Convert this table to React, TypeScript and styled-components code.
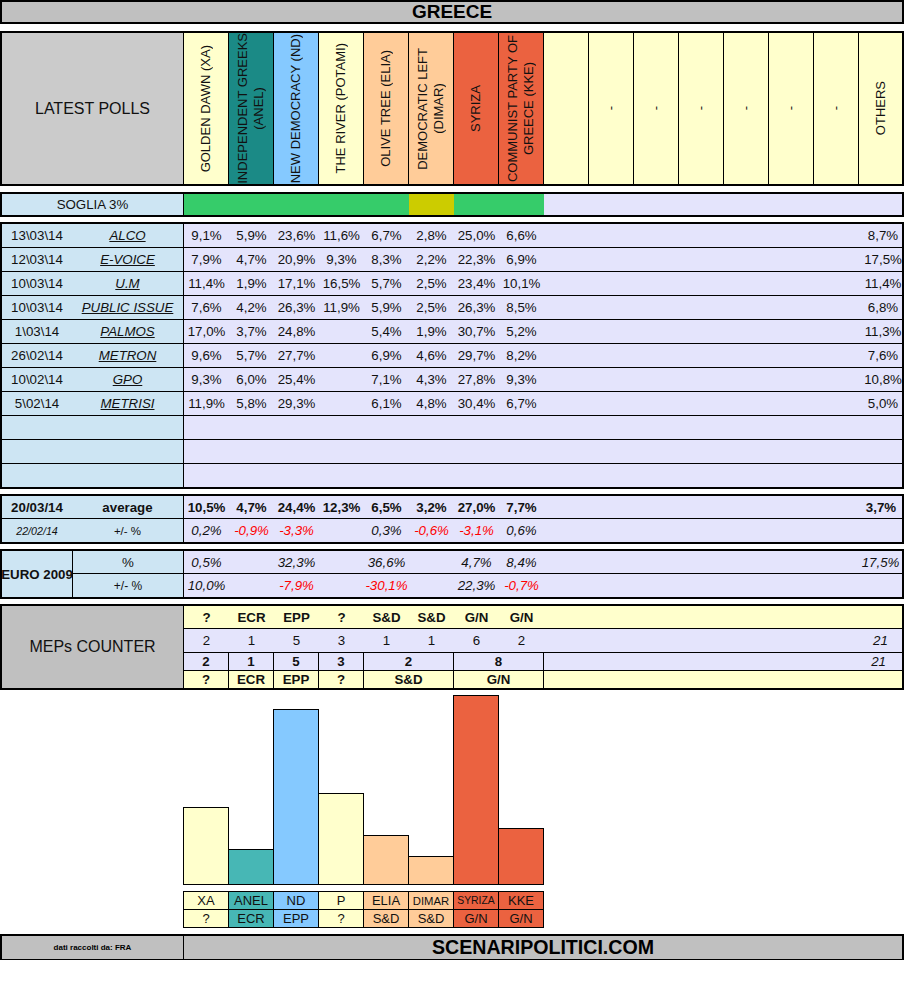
import React from 'react';
import styled, { createGlobalStyle } from 'styled-components';

const Y = '#ffffcc';
const TEAL = '#1b8a86';
const TEAL_LIGHT = '#47b7b5';
const BLUE = '#85c9ff';
const PEACH = '#ffcc99';
const RED = '#eb6240';
const LAV = '#e4e4fc';
const LBLUE = '#cde5f3';
const GRAY = '#c0c0c0';
const GREEN = '#36cc6a';
const OLIVE = '#cccc00';
const NEG = '#ff0000';
const COLS = 'repeat(15, 45px) 43px';

const GlobalStyle = createGlobalStyle`
  html, body { margin: 0; padding: 0; background: #fff; }
  body { font-family: "Liberation Sans", Arial, sans-serif; color: #111; }
  * { box-sizing: border-box; }
`;

const Sheet = styled.div`
  width: 904px;
  display: flex;
  flex-direction: column;
`;

const TitleBar = styled.div`
  height: 24px;
  border: 2px solid #000;
  background: ${GRAY};
  display: flex;
  align-items: center;
  justify-content: center;
  font-weight: bold;
  font-size: 19px;
  color: #000;
`;

const Section = styled.div<{ $mt: number }>`
  margin-top: ${(p) => p.$mt}px;
  border: 2px solid #000;
  background: #000;
`;

const HeaderGrid = styled(Section)`
  height: 155px;
  display: grid;
  grid-template-columns: 181px repeat(15, 44px) 43px;
  column-gap: 1px;
`;

const HeaderLabel = styled.div`
  background: #cbcbcb;
  display: flex;
  align-items: center;
  justify-content: center;
  font-size: 16px;
  color: #111;
`;

const PartyHead = styled.div<{ $bg: string }>`
  background: ${(p) => p.$bg};
  display: flex;
  align-items: center;
  justify-content: center;
  overflow: visible;
`;

const VerticalText = styled.span`
  writing-mode: vertical-rl;
  transform: rotate(180deg);
  white-space: nowrap;
  text-align: center;
  font-size: 13px;
  line-height: 16px;
  color: #111;
`;

const SogliaGrid = styled(Section)`
  height: 25px;
  display: grid;
  grid-template-columns: 181px 718px;
  column-gap: 1px;
`;

const SogliaLabel = styled.div`
  background: ${LBLUE};
  display: flex;
  align-items: center;
  justify-content: center;
  font-size: 13.3px;
`;

const SegRow = styled.div`
  background: ${LAV};
  display: grid;
  grid-template-columns: ${COLS};
`;

const Seg = styled.div<{ $bg: string }>`
  background: ${(p) => p.$bg};
`;

const Table = styled(Section)`
  display: flex;
  flex-direction: column;
  row-gap: 1px;
`;

const Row = styled.div<{ $h: number }>`
  height: ${(p) => p.$h}px;
  display: grid;
  grid-template-columns: 181px 718px;
  column-gap: 1px;
`;

const LeftPair = styled.div`
  background: ${LBLUE};
  display: grid;
  grid-template-columns: 70px 111px;
`;

const LeftText = styled.div<{ $bold?: boolean; $italic?: boolean; $size?: number; $link?: boolean }>`
  display: flex;
  align-items: center;
  justify-content: center;
  white-space: nowrap;
  font-size: ${(p) => p.$size ?? 13.3}px;
  font-weight: ${(p) => (p.$bold ? 'bold' : 'normal')};
  font-style: ${(p) => (p.$italic || p.$link ? 'italic' : 'normal')};
  text-decoration: ${(p) => (p.$link ? 'underline' : 'none')};
  color: #111;
`;

const Values = styled.div<{ $bg?: string }>`
  background: ${(p) => p.$bg ?? LAV};
  display: grid;
  grid-template-columns: ${COLS};
`;

const Val = styled.div<{ $bold?: boolean; $italic?: boolean; $neg?: boolean; $shift?: number }>`
  display: flex;
  align-items: center;
  justify-content: center;
  white-space: nowrap;
  padding-left: ${(p) => p.$shift ?? 0}px;
  font-size: 13.3px;
  font-weight: ${(p) => (p.$bold ? 'bold' : 'normal')};
  font-style: ${(p) => (p.$italic ? 'italic' : 'normal')};
  color: ${(p) => (p.$neg ? NEG : '#111')};
`;

const EuroGrid = styled(Section)`
  display: grid;
  grid-template-columns: 70px 110px 718px;
  grid-template-rows: 22px 23px;
  gap: 1px;
`;

const EuroLabel = styled.div`
  grid-row: span 2;
  background: ${LBLUE};
  display: flex;
  align-items: center;
  justify-content: center;
  white-space: nowrap;
  font-weight: bold;
  font-size: 13.3px;
  color: #111;
`;

const EuroSub = styled(LeftText)`
  background: ${LBLUE};
`;

const MepsGrid = styled(Section)`
  display: grid;
  grid-template-columns: 181px 718px;
  column-gap: 1px;
`;

const MepsLabel = styled.div`
  background: ${GRAY};
  display: flex;
  align-items: center;
  justify-content: center;
  font-size: 16px;
  color: #111;
`;

const MepsRows = styled.div`
  display: flex;
  flex-direction: column;
  row-gap: 1px;
`;

const MepsPlain = styled.div<{ $h: number; $bg: string }>`
  height: ${(p) => p.$h}px;
  background: ${(p) => p.$bg};
  display: grid;
  grid-template-columns: ${COLS};
`;

const MepsSplit = styled.div<{ $h: number }>`
  height: ${(p) => p.$h}px;
  display: grid;
  grid-template-columns: 44px 44px 44px 44px 89px 89px 1fr;
  column-gap: 1px;
`;

const SplitCell = styled.div<{ $bg: string; $end?: boolean; $italic?: boolean }>`
  background: ${(p) => p.$bg};
  display: flex;
  align-items: center;
  justify-content: ${(p) => (p.$end ? 'flex-end' : 'center')};
  padding-right: ${(p) => (p.$end ? 16 : 0)}px;
  font-size: 13.3px;
  font-weight: ${(p) => (p.$italic ? 'normal' : 'bold')};
  font-style: ${(p) => (p.$italic ? 'italic' : 'normal')};
  color: #111;
`;

const ChartArea = styled.div`
  height: 195px;
  padding-left: 183px;
  display: flex;
  align-items: flex-end;
`;

const Bar = styled.div<{ $bg: string }>`
  width: 46px;
  border: 1px solid #000;
  background: ${(p) => p.$bg};
  & + & { margin-left: -1px; }
`;

const LabelTable = styled.div`
  margin-top: 6px;
  margin-left: 183px;
  width: 361px;
  border: 1px solid #000;
  background: #000;
  display: grid;
  grid-template-columns: repeat(8, 44px);
  grid-template-rows: 17px 17px;
  gap: 1px;
`;

const LabelCell = styled.div<{ $bg: string; $size?: number }>`
  background: ${(p) => p.$bg};
  display: flex;
  align-items: center;
  justify-content: center;
  white-space: nowrap;
  font-size: ${(p) => p.$size ?? 13}px;
  color: #111;
`;

const FooterGrid = styled(Section)`
  height: 26px;
  display: grid;
  grid-template-columns: 181px 718px;
  column-gap: 1px;
`;

const FooterCell = styled.div<{ $size: number }>`
  background: ${GRAY};
  display: flex;
  align-items: center;
  justify-content: center;
  white-space: nowrap;
  font-weight: bold;
  font-size: ${(p) => p.$size}px;
  color: #000;
`;

const heads: { text: string; bg: string }[] = [
  { text: 'GOLDEN DAWN (XA)', bg: Y },
  { text: 'INDEPENDENT GREEKS\n(ANEL)', bg: TEAL },
  { text: 'NEW DEMOCRACY (ND)', bg: BLUE },
  { text: 'THE RIVER (POTAMI)', bg: Y },
  { text: 'OLIVE TREE (ELIA)', bg: PEACH },
  { text: 'DEMOCRATIC LEFT\n(DIMAR)', bg: PEACH },
  { text: 'SYRIZA', bg: RED },
  { text: 'COMMUNIST PARTY OF\nGREECE (KKE)', bg: RED },
  { text: '', bg: Y },
  { text: '-', bg: Y },
  { text: '-', bg: Y },
  { text: '-', bg: Y },
  { text: '-', bg: Y },
  { text: '-', bg: Y },
  { text: '-', bg: Y },
  { text: 'OTHERS', bg: Y },
];

const soglia = [GREEN, GREEN, GREEN, GREEN, GREEN, OLIVE, GREEN, GREEN];

type Poll = { date: string; name: string; v: string[]; others: string };
const polls: Poll[] = [
  { date: '13\\03\\14', name: 'ALCO', v: ['9,1%', '5,9%', '23,6%', '11,6%', '6,7%', '2,8%', '25,0%', '6,6%'], others: '8,7%' },
  { date: '12\\03\\14', name: 'E-VOICE', v: ['7,9%', '4,7%', '20,9%', '9,3%', '8,3%', '2,2%', '22,3%', '6,9%'], others: '17,5%' },
  { date: '10\\03\\14', name: 'U.M', v: ['11,4%', '1,9%', '17,1%', '16,5%', '5,7%', '2,5%', '23,4%', '10,1%'], others: '11,4%' },
  { date: '10\\03\\14', name: 'PUBLIC ISSUE', v: ['7,6%', '4,2%', '26,3%', '11,9%', '5,9%', '2,5%', '26,3%', '8,5%'], others: '6,8%' },
  { date: '1\\03\\14', name: 'PALMOS', v: ['17,0%', '3,7%', '24,8%', '', '5,4%', '1,9%', '30,7%', '5,2%'], others: '11,3%' },
  { date: '26\\02\\14', name: 'METRON', v: ['9,6%', '5,7%', '27,7%', '', '6,9%', '4,6%', '29,7%', '8,2%'], others: '7,6%' },
  { date: '10\\02\\14', name: 'GPO', v: ['9,3%', '6,0%', '25,4%', '', '7,1%', '4,3%', '27,8%', '9,3%'], others: '10,8%' },
  { date: '5\\02\\14', name: 'METRISI', v: ['11,9%', '5,8%', '29,3%', '', '6,1%', '4,8%', '30,4%', '6,7%'], others: '5,0%' },
];

const avg = ['10,5%', '4,7%', '24,4%', '12,3%', '6,5%', '3,2%', '27,0%', '7,7%'];
const diff = ['0,2%', '-0,9%', '-3,3%', '', '0,3%', '-0,6%', '-3,1%', '0,6%'];
const euro = ['0,5%', '', '32,3%', '', '36,6%', '', '4,7%', '8,4%'];
const euroDiff = ['10,0%', '', '-7,9%', '', '-30,1%', '', '22,3%', '-0,7%'];

const mepGroups = ['?', 'ECR', 'EPP', '?', 'S&D', 'S&D', 'G/N', 'G/N'];
const mepSeats = ['2', '1', '5', '3', '1', '1', '6', '2'];

const bars = [
  { label: 'XA', group: '?', bg: Y, h: 78 },
  { label: 'ANEL', group: 'ECR', bg: TEAL_LIGHT, h: 36 },
  { label: 'ND', group: 'EPP', bg: BLUE, h: 176 },
  { label: 'P', group: '?', bg: Y, h: 92 },
  { label: 'ELIA', group: 'S&D', bg: PEACH, h: 50 },
  { label: 'DIMAR', group: 'S&D', bg: PEACH, h: 29, size: 11.3 },
  { label: 'SYRIZA', group: 'G/N', bg: RED, h: 190, size: 10.4 },
  { label: 'KKE', group: 'G/N', bg: RED, h: 57 },
];

const blanks = (n: number) => Array.from({ length: n }, () => '');

function ValueRow({ values, others, bold, italic, othersShift }: { values: string[]; others: string; bold?: boolean; italic?: boolean; othersShift: number }) {
  const cells = [...values, ...blanks(7)];
  return (
    <Values>
      {cells.map((v, i) => (
        <Val key={i} $bold={bold} $italic={italic} $neg={v.startsWith('-')}>
          {v}
        </Val>
      ))}
      <Val $bold={bold} $italic={italic} $shift={othersShift}>
        {others}
      </Val>
    </Values>
  );
}

export default function App() {
  return (
    <>
      <GlobalStyle />
      <Sheet>
        <TitleBar>GREECE</TitleBar>

        <HeaderGrid $mt={7}>
          <HeaderLabel>LATEST POLLS</HeaderLabel>
          {heads.map((h, i) => (
            <PartyHead key={i} $bg={h.bg}>
              <VerticalText>
                {h.text.split('\n').map((line, j) => (
                  <React.Fragment key={j}>
                    {j > 0 && <br />}
                    {line}
                  </React.Fragment>
                ))}
              </VerticalText>
            </PartyHead>
          ))}
        </HeaderGrid>

        <SogliaGrid $mt={6}>
          <SogliaLabel>SOGLIA 3%</SogliaLabel>
          <SegRow>
            {soglia.map((c, i) => (
              <Seg key={i} $bg={c} />
            ))}
          </SegRow>
        </SogliaGrid>

        <Table $mt={5}>
          {polls.map((p, i) => (
            <Row key={i} $h={23}>
              <LeftPair>
                <LeftText>{p.date}</LeftText>
                <LeftText $link>{p.name}</LeftText>
              </LeftPair>
              <ValueRow values={p.v} others={p.others} othersShift={5} />
            </Row>
          ))}
          {[0, 1, 2].map((i) => (
            <Row key={`e${i}`} $h={23}>
              <LeftPair />
              <Values />
            </Row>
          ))}
        </Table>

        <Table $mt={5}>
          <Row $h={22}>
            <LeftPair>
              <LeftText $bold>20/03/14</LeftText>
              <LeftText $bold>average</LeftText>
            </LeftPair>
            <ValueRow values={avg} others="3,7%" bold othersShift={1} />
          </Row>
          <Row $h={23}>
            <LeftPair>
              <LeftText $italic $size={10.7}>22/02/14</LeftText>
              <LeftText $size={11.5}>+/- %</LeftText>
            </LeftPair>
            <ValueRow values={diff} others="" italic othersShift={0} />
          </Row>
        </Table>

        <EuroGrid $mt={5}>
          <EuroLabel>EURO 2009</EuroLabel>
          <EuroSub>%</EuroSub>
          <ValueRow values={euro} others="17,5%" italic othersShift={0} />
          <EuroSub $size={12}>+/- %</EuroSub>
          <ValueRow values={euroDiff} others="" italic othersShift={0} />
        </EuroGrid>

        <MepsGrid $mt={5}>
          <MepsLabel>MEPs COUNTER</MepsLabel>
          <MepsRows>
            <MepsPlain $h={22} $bg={Y}>
              {mepGroups.map((g, i) => (
                <Val key={i} $bold>
                  {g}
                </Val>
              ))}
            </MepsPlain>
            <MepsPlain $h={23} $bg={LAV}>
              {[...mepSeats, ...blanks(7)].map((s, i) => (
                <Val key={i}>{s}</Val>
              ))}
              <Val $italic>21</Val>
            </MepsPlain>
            <MepsSplit $h={17}>
              {['2', '1', '5', '3', '2', '8'].map((s, i) => (
                <SplitCell key={i} $bg={LAV}>
                  {s}
                </SplitCell>
              ))}
              <SplitCell $bg={LAV} $end $italic>
                21
              </SplitCell>
            </MepsSplit>
            <MepsSplit $h={17}>
              {['?', 'ECR', 'EPP', '?', 'S&D', 'G/N'].map((s, i) => (
                <SplitCell key={i} $bg={Y}>
                  {s}
                </SplitCell>
              ))}
              <SplitCell $bg={Y} />
            </MepsSplit>
          </MepsRows>
        </MepsGrid>

        <ChartArea>
          {bars.map((b) => (
            <Bar key={b.label} $bg={b.bg} style={{ height: b.h }} />
          ))}
        </ChartArea>

        <LabelTable>
          {bars.map((b) => (
            <LabelCell key={b.label} $bg={b.bg} $size={b.size}>
              {b.label}
            </LabelCell>
          ))}
          {bars.map((b) => (
            <LabelCell key={`g${b.label}`} $bg={b.bg}>
              {b.group}
            </LabelCell>
          ))}
        </LabelTable>

        <FooterGrid $mt={6}>
          <FooterCell $size={8}>dati raccolti da: FRA</FooterCell>
          <FooterCell $size={19.6}>SCENARIPOLITICI.COM</FooterCell>
        </FooterGrid>
      </Sheet>
    </>
  );
}
